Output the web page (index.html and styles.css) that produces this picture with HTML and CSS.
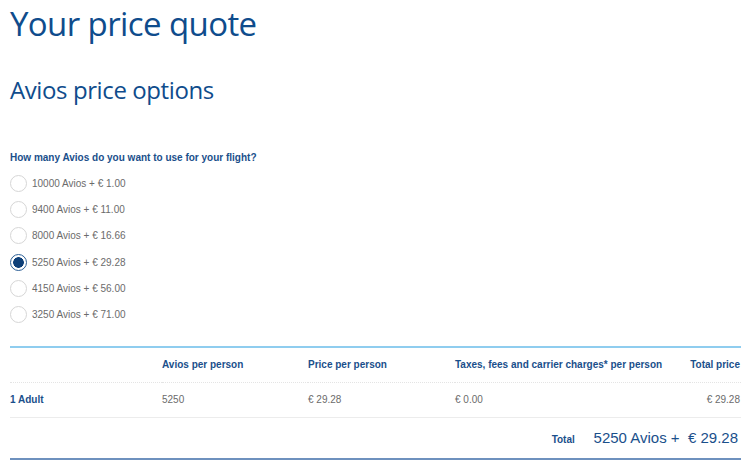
FILE: index.html
```html
<!DOCTYPE html>
<html lang="en">
<head>
<meta charset="utf-8">
<title>Your price quote</title>
<link rel="stylesheet" href="styles.css">
</head>
<body>
<main class="page">
  <h1 class="title">Your price quote</h1>
  <h2 class="subtitle">Avios price options</h2>

  <fieldset class="options">
    <legend class="question">How many Avios do you want to use for your flight?</legend>
    <label class="option"><span class="radio"></span><span class="option-text">10000 Avios + € 1.00</span></label>
    <label class="option"><span class="radio"></span><span class="option-text">9400 Avios + € 11.00</span></label>
    <label class="option"><span class="radio"></span><span class="option-text">8000 Avios + € 16.66</span></label>
    <label class="option"><span class="radio is-checked"></span><span class="option-text">5250 Avios + € 29.28</span></label>
    <label class="option"><span class="radio"></span><span class="option-text">4150 Avios + € 56.00</span></label>
    <label class="option"><span class="radio"></span><span class="option-text">3250 Avios + € 71.00</span></label>
  </fieldset>

  <table class="quote">
    <thead>
      <tr>
        <th class="col-pax"></th>
        <th class="col-avios">Avios per person</th>
        <th class="col-price">Price per person</th>
        <th class="col-tax">Taxes, fees and carrier charges* per person</th>
        <th class="col-total">Total price</th>
      </tr>
    </thead>
    <tbody>
      <tr>
        <th class="pax">1 Adult</th>
        <td>5250</td>
        <td>€ 29.28</td>
        <td>€ 0.00</td>
        <td class="col-total">€ 29.28</td>
      </tr>
    </tbody>
    <tfoot>
      <tr>
        <td colspan="5" class="sum">
          <span class="sum-label">Total</span>
          <span class="sum-value">5250 Avios + &nbsp;€ 29.28</span>
        </td>
      </tr>
    </tfoot>
  </table>
</main>
</body>
</html>
```

FILE: styles.css
```css
html, body {
  margin: 0;
  background: #ffffff;
}

body {
  font-family: "Liberation Sans", Arial, sans-serif;
  color: #666666;
}

.page {
  padding: 0 9px 0 10px;
}

.title {
  margin: 0;
  padding-top: 2px;
  font-family: "Open Sans", "Noto Sans", sans-serif;
  font-weight: 400;
  font-size: 33px;
  line-height: 44px;
  color: #0f4c8c;
  letter-spacing: -0.6px;
}

.subtitle {
  margin: 28px 0 0;
  font-family: "Open Sans", "Noto Sans", sans-serif;
  font-weight: 400;
  font-size: 24px;
  line-height: 32px;
  color: #0f4c8c;
  letter-spacing: -0.4px;
}

.options {
  margin: 45px 0 0;
  padding: 0;
  border: 0;
  display: flex;
  flex-direction: column;
}

.question {
  padding: 0;
  margin-bottom: 5px;
  font-size: 10px;
  font-weight: 700;
  line-height: 14px;
  color: #1a4f8b;
}

.option {
  display: flex;
  align-items: center;
  gap: 5px;
  height: 26.3px;
  font-size: 10px;
  color: #6b6b6b;
}

.radio {
  box-sizing: border-box;
  width: 17px;
  height: 17px;
  border-radius: 50%;
  border: 1px solid #d6d6d6;
  background: #ffffff;
}

.radio.is-checked {
  border: 1.5px solid #2c5f96;
  background: radial-gradient(circle, #0d3f78 0 5px, #ffffff 5.6px);
}

.quote {
  margin-top: 18px;
  width: 731px;
  border-collapse: collapse;
  border-top: 2px solid #8fcdef;
  border-bottom: 2px solid #6e91be;
  font-size: 10px;
}

.quote th,
.quote td {
  padding: 0;
  text-align: left;
  vertical-align: middle;
}

.quote thead th {
  height: 34px;
  font-weight: 700;
  color: #1a4f8b;
  border-bottom: 1px dotted #e4e4e4;
}

.col-pax { width: 152px; }
.col-avios { width: 146px; }
.col-price { width: 147px; }
.col-tax { width: 235px; }

.quote .col-total {
  text-align: right;
  padding-right: 1px;
}

.quote tbody th,
.quote tbody td {
  height: 34px;
  border-bottom: 1px solid #ececec;
  color: #6b6b6b;
}

.quote tbody .pax {
  font-weight: 700;
  color: #1a4f8b;
}

.quote .sum {
  height: 40px;
  text-align: right;
  padding-right: 3px;
}

.sum-label {
  font-weight: 700;
  font-size: 10px;
  color: #1a4f8b;
  margin-right: 16px;
}

.sum-value {
  font-size: 15px;
  color: #1a4f8b;
}
```
